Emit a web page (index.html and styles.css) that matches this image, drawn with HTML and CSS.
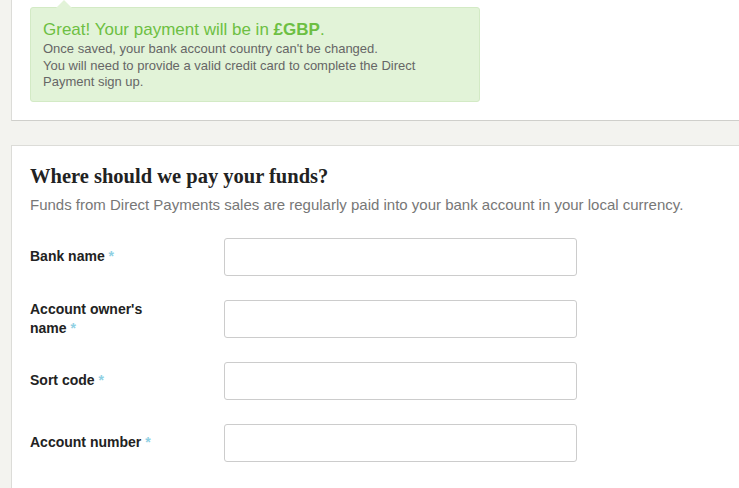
FILE: index.html
```html
<!DOCTYPE html>
<html lang="en">
<head>
    <meta charset="UTF-8">
    <meta name="viewport" content="width=device-width, initial-scale=1.0">
    <title>Direct Payments</title>
    <link rel="stylesheet" href="styles.css">
</head>
<body>

<div class="page">
    <div class="card card-top">
        <div class="notice">
            <p class="notice-title">Great! Your payment will be in <strong>£GBP</strong>.</p>
            <p class="notice-text">Once saved, your bank account country can't be changed.<br>
            You will need to provide a valid credit card to complete the Direct Payment sign up.</p>
        </div>
    </div>

    <div class="card card-form">
        <h2>Where should we pay your funds?</h2>
        <p class="subtitle">Funds from Direct Payments sales are regularly paid into your bank account in your local currency.</p>

        <form class="bank-form">
            <div class="form-row">
                <label for="bank">Bank name <span class="req">*</span></label>
                <input type="text" id="bank" name="bank">
            </div>
            <div class="form-row">
                <label for="owner">Account owner's name <span class="req">*</span></label>
                <input type="text" id="owner" name="owner">
            </div>
            <div class="form-row">
                <label for="sort">Sort code <span class="req">*</span></label>
                <input type="text" id="sort" name="sort">
            </div>
            <div class="form-row">
                <label for="number">Account number <span class="req">*</span></label>
                <input type="text" id="number" name="number">
            </div>
        </form>
    </div>
</div>

</body>
</html>
```

FILE: styles.css
```css
body {
    font-family: "Liberation Sans", Arial, sans-serif;
    background-color: #f3f3ef;
    color: #222;
    margin: 0;
    padding: 0;
}

.page {
    padding-left: 11px;
}

.card {
    background-color: #fff;
    border: 1px solid #dcdcd8;
    border-right: none;
}

.card-top {
    border-top: none;
    border-bottom-color: #cfcfcb;
    padding: 7px 0 18px 18px;
}

.notice {
    position: relative;
    width: 412px;
    padding: 12px 24px 10px 12px;
    background-color: #e2f3d8;
    border: 1px solid #d3eac5;
    border-radius: 3px;
}

.notice::before {
    content: "";
    position: absolute;
    top: -8px;
    left: 25px;
    border-left: 8px solid transparent;
    border-right: 8px solid transparent;
    border-bottom: 8px solid #e2f3d8;
}

.notice p {
    margin: 0;
}

.notice-title {
    font-size: 17px;
    color: #6dbf43;
    line-height: 20px;
    margin-bottom: 1px !important;
}

.notice-title strong {
    font-weight: bold;
}

.notice-text {
    font-size: 13px;
    line-height: 16.5px;
    color: #666;
}

.card-form {
    margin-top: 24px;
    padding: 17px 0 30px 18px;
}

.card-form h2 {
    font-family: "Liberation Serif", "Times New Roman", serif;
    font-size: 20.5px;
    font-weight: bold;
    color: #222;
    margin: 0 0 6px 0;
    line-height: 26px;
}

.subtitle {
    font-size: 15px;
    color: #777;
    margin: 0 0 23px 0;
    line-height: 20px;
}

.bank-form {
    display: flex;
    flex-direction: column;
    gap: 24px;
}

.form-row {
    display: flex;
    align-items: center;
}

.form-row label {
    width: 130px;
    margin-right: 64px;
    font-size: 14px;
    font-weight: bold;
    line-height: 19px;
    color: #222;
}

.req {
    color: #8fd0e3;
}

.form-row input {
    width: 353px;
    height: 38px;
    box-sizing: border-box;
    border: 1px solid #ccc;
    border-radius: 3px;
    background-color: #fff;
    padding: 0 10px;
    font-size: 14px;
}
```
